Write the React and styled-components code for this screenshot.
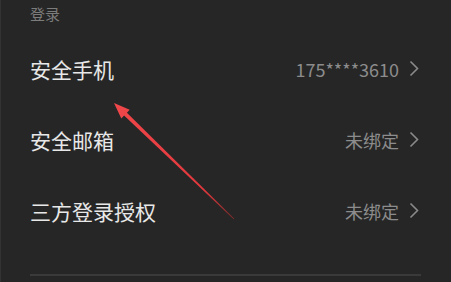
import React from 'react';
import styled, { createGlobalStyle } from 'styled-components';

const Global = createGlobalStyle`
  html, body {
    margin: 0;
    padding: 0;
    background: #262626;
  }
  body {
    font-family: "Noto Sans CJK SC", "Noto Sans", sans-serif;
  }
`;

const Page = styled.div`
  position: relative;
  width: 451px;
  height: 282px;
  overflow: hidden;
  background: #262626;
  border-left: 1px solid #333;
  box-sizing: border-box;
`;

const Section = styled.div`
  padding: 0 32px 0 29px;
  display: flex;
  flex-direction: column;
`;

const Header = styled.div`
  height: 33px;
  line-height: 28px;
  font-size: 15px;
  color: #7c7c7c;
`;

const Row = styled.div`
  height: 71px;
  display: flex;
  align-items: center;
  justify-content: space-between;
`;

const Label = styled.span`
  font-size: 21px;
  color: #e8e8e8;
`;

const Value = styled.span`
  display: flex;
  align-items: center;
  gap: 10px;
  font-size: 18px;
  color: #8c8c8c;
`;

const Divider = styled.div`
  margin-top: 28px;
  height: 2px;
  background: #3a3a3a;
  margin-right: -2px;
`;

const Overlay = styled.svg`
  position: absolute;
  left: 0;
  top: 0;
  pointer-events: none;
`;

function Chevron() {
  return (
    <svg width="10" height="17" viewBox="0 0 10 17">
      <polyline points="1.5,1.5 8.5,8.5 1.5,15.5" fill="none" stroke="#8a8a8a" strokeWidth="1.6" />
    </svg>
  );
}

const rows = [
  { label: '安全手机', value: '175****3610' },
  { label: '安全邮箱', value: '未绑定' },
  { label: '三方登录授权', value: '未绑定' },
];

export default function App() {
  return (
    <Page>
      <Global />
      <Section>
        <Header>登录</Header>
        {rows.map((r) => (
          <Row key={r.label}>
            <Label>{r.label}</Label>
            <Value>
              {r.value}
              <Chevron />
            </Value>
          </Row>
        ))}
        <Divider />
      </Section>
      <Overlay width="451" height="282" viewBox="0 0 451 282">
        <defs>
          <linearGradient id="arrowFade" x1="113" y1="103" x2="233" y2="219" gradientUnits="userSpaceOnUse">
            <stop offset="0" stopColor="#f0474b" />
            <stop offset="0.75" stopColor="#e2383d" />
            <stop offset="1" stopColor="#7a2a2a" />
          </linearGradient>
        </defs>
        <polygon
          points="113,103 128.7,109.8 125.9,112.7 233.35,218.64 232.65,219.36 123.1,115.5 120.3,118.4"
          fill="url(#arrowFade)"
        />
      </Overlay>
    </Page>
  );
}
